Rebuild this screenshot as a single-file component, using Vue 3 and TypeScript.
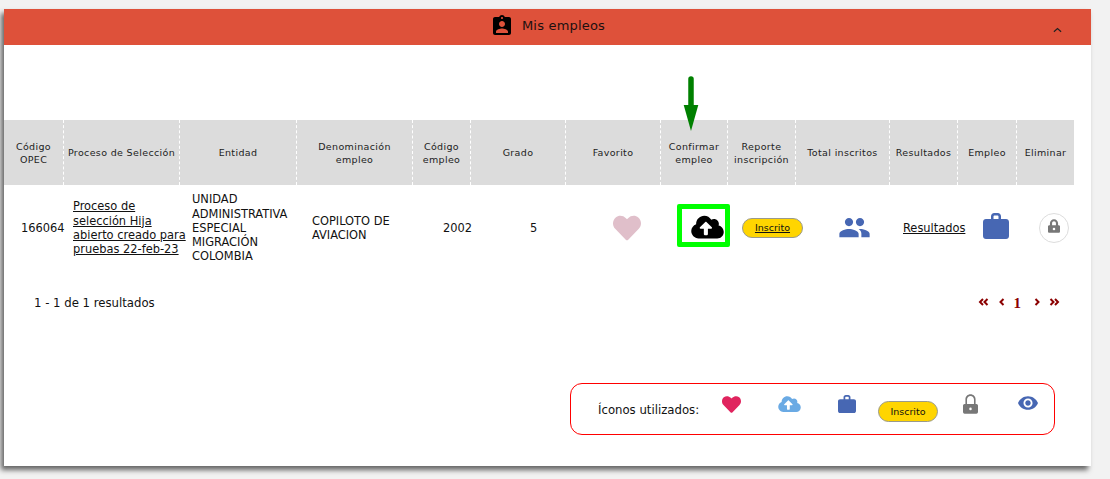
<script setup lang="ts">
const headers: string[] = [
  'Código OPEC',
  'Proceso de Selección',
  'Entidad',
  'Denominación empleo',
  'Código empleo',
  'Grado',
  'Favorito',
  'Confirmar empleo',
  'Reporte inscripción',
  'Total inscritos',
  'Resultados',
  'Empleo',
  'Eliminar',
]
</script>

<template>
  <div class="page">
    <div class="card">
      <header class="bar">
        <svg class="bar-icon" viewBox="0 0 24 24"><path d="M19 3h-4.18C14.4 1.84 13.3 1 12 1c-1.3 0-2.4.84-2.82 2H5c-1.1 0-2 .9-2 2v14c0 1.1.9 2 2 2h14c1.1 0 2-.9 2-2V5c0-1.1-.9-2-2-2zm-7 0c.55 0 1 .45 1 1s-.45 1-1 1-1-.45-1-1 .45-1 1-1zm0 4c1.66 0 3 1.34 3 3s-1.34 3-3 3-3-1.34-3-3 1.34-3 3-3zm6 12H6v-1.4c0-2 4-3.1 6-3.1s6 1.1 6 3.1V19z" /></svg>
        <span class="bar-title">Mis empleos</span>
        <svg class="bar-chevron" viewBox="0 0 10 6"><path d="M1 5 L5 1.5 L9 5" /></svg>
      </header>

      <svg class="arrow" viewBox="0 0 16 56">
        <path d="M8 3 V30" />
        <polygon points="0.7,29 15.300,29 8,55" />
      </svg>

      <div class="thead">
        <div v-for="h in headers" :key="h" class="th"><span>{{ h }}</span></div>
      </div>

      <div class="row">
        <div class="cell">166064</div>
        <div class="cell"><a class="link">Proceso de selección Hija abierto creado para pruebas 22-feb-23</a></div>
        <div class="cell">UNIDAD ADMINISTRATIVA ESPECIAL MIGRACIÓN COLOMBIA</div>
        <div class="cell">COPILOTO DE AVIACION</div>
        <div class="cell">2002</div>
        <div class="cell">5</div>
        <div class="cell">
          <svg class="heart" viewBox="0 0 512 512"><path d="M462.3 62.6C407.5 15.9 326 24.3 275.7 76.2L256 96.5l-19.7-20.3C186.1 24.3 104.5 15.9 49.7 62.6c-62.8 53.6-66.1 149.8-9.9 207.9l193.5 199.8c12.5 12.9 32.8 12.9 45.3 0l193.5-199.8c56.3-58.1 53-154.3-9.8-207.9z" /></svg>
        </div>
        <div class="cell">
          <div class="confirm">
            <svg class="cloud" viewBox="0 0 640 512"><path d="M537.6 226.6c4.1-10.7 6.4-22.4 6.4-34.6 0-53-43-96-96-96-19.7 0-38.1 6-53.3 16.2C367 64.2 315.3 32 256 32c-88.4 0-160 71.6-160 160 0 2.7.1 5.4.2 8.1C40.2 219.8 0 273.2 0 336c0 79.5 64.5 144 144 144h368c70.7 0 128-57.3 128-128 0-61.9-44-113.6-102.4-125.4zM393.4 288H328v112c0 8.8-7.2 16-16 16h-48c-8.8 0-16-7.2-16-16V288h-65.4c-14.3 0-21.4-17.2-11.3-27.3l105.4-105.4c6.2-6.2 16.4-6.2 22.6 0l105.4 105.4c10.1 10.1 2.9 27.3-11.3 27.3z" /></svg>
          </div>
        </div>
        <div class="cell"><span class="badge badge-link">Inscrito</span></div>
        <div class="cell">
          <svg class="people" viewBox="0 0 24 24"><path d="M16 11c1.66 0 2.99-1.34 2.99-3S17.66 5 16 5c-1.66 0-3 1.34-3 3s1.34 3 3 3zm-8 0c1.66 0 2.99-1.34 2.99-3S9.66 5 8 5C6.34 5 5 6.34 5 8s1.34 3 3 3zm0 2c-2.33 0-7 1.17-7 3.5V19h14v-2.5c0-2.33-4.67-3.5-7-3.5zm8 0c-.29 0-.62.02-.97.05 1.16.84 1.97 1.97 1.97 3.45V19h6v-2.5c0-2.33-4.67-3.5-7-3.5z" /></svg>
        </div>
        <div class="cell"><a class="link">Resultados</a></div>
        <div class="cell">
          <svg class="case case-lg" viewBox="0 0 26 26"><path d="M3 6h5V3.2C8 1.4 9.4 0 11.2 0h3.6C16.6 0 18 1.4 18 3.2V6h5c1.7 0 3 1.3 3 3v14c0 1.7-1.3 3-3 3H3c-1.7 0-3-1.3-3-3V9c0-1.7 1.3-3 3-3zm7.5 0h5V3.4c0-.5-.4-.9-.9-.9h-3.2c-.5 0-.9.4-.9.9V6z" fill-rule="evenodd" /></svg>
        </div>
        <div class="cell">
          <div class="lock-circle">
            <svg class="lock lock-sm" viewBox="0 0 448 512"><path d="M400 224h-24v-72C376 68.2 307.8 0 224 0S72 68.2 72 152v72H48c-26.5 0-48 21.5-48 48v192c0 26.5 21.5 48 48 48h352c26.5 0 48-21.5 48-48V272c0-26.500-21.500-48-48-48zm-104 0H152v-72c0-39.7 32.3-72 72-72s72 32.3 72 72v72z" /><circle cx="224" cy="368" r="48" fill="#fff" /></svg>
          </div>
        </div>
      </div>

      <div class="pager">
        <span class="count">1 - 1 de 1 resultados</span>
        <div class="pages">
          <svg class="pg pg-d" viewBox="0 0 11 8"><path d="M5 1 L2 4 L5 7 M9.5 1 L6.500 4 L9.5 7" /></svg>
          <svg class="pg pg-s pg-prev" viewBox="0 0 6 8"><path d="M4.500 1 L1.500 4 L4.500 7" /></svg>
          <b class="page-num">1</b>
          <svg class="pg pg-s pg-next" viewBox="0 0 6 8"><path d="M1.500 1 L4.500 4 L1.500 7" /></svg>
          <svg class="pg pg-d" viewBox="0 0 11 8"><path d="M1.500 1 L4.500 4 L1.500 7 M6 1 L9 4 L6 7" /></svg>
        </div>
      </div>

      <div class="legend">
        <span class="legend-text">Íconos utilizados:</span>
        <svg class="lg-heart" viewBox="0 0 512 512"><path d="M462.3 62.6C407.5 15.9 326 24.3 275.7 76.2L256 96.5l-19.7-20.3C186.1 24.3 104.5 15.9 49.7 62.6c-62.8 53.6-66.1 149.8-9.9 207.9l193.5 199.8c12.5 12.9 32.8 12.9 45.3 0l193.5-199.8c56.3-58.1 53-154.3-9.8-207.9z" /></svg>
        <svg class="lg-cloud" viewBox="0 0 640 512"><path d="M537.6 226.6c4.1-10.7 6.4-22.4 6.4-34.6 0-53-43-96-96-96-19.7 0-38.1 6-53.3 16.2C367 64.2 315.3 32 256 32c-88.4 0-160 71.6-160 160 0 2.7.1 5.4.2 8.1C40.2 219.8 0 273.2 0 336c0 79.5 64.5 144 144 144h368c70.7 0 128-57.3 128-128 0-61.9-44-113.6-102.4-125.4zM393.4 288H328v112c0 8.8-7.2 16-16 16h-48c-8.8 0-16-7.2-16-16V288h-65.4c-14.3 0-21.4-17.2-11.3-27.3l105.4-105.4c6.2-6.2 16.4-6.2 22.6 0l105.4 105.4c10.1 10.1 2.9 27.3-11.3 27.3z" /></svg>
        <svg class="case lg-case" viewBox="0 0 26 26"><path d="M3 6h5V3.200C8 1.400 9.400 0 11.200 0h3.600C16.600 0 18 1.400 18 3.200V6h5c1.700 0 3 1.300 3 3v14c0 1.700-1.300 3-3 3H3c-1.700 0-3-1.300-3-3V9c0-1.700 1.300-3 3-3zm7.500 0h5V3.400c0-.5-.4-.9-.9-.9h-3.200c-.5 0-.9.4-.9.9V6z" fill-rule="evenodd" /></svg>
        <span class="badge lg-badge">Inscrito</span>
        <svg class="lock lg-lock" viewBox="0 0 448 580"><path d="M400 292h-24v-140C376 68.200 307.800 0 224 0S72 68.200 72 152v140H48c-26.500 0-48 21.500-48 48v192c0 26.500 21.500 48 48 48h352c26.500 0 48-21.500 48-48V340c0-26.500-21.500-48-48-48zm-72 0H120v-140c0-57 47-104 104-104s104 47 104 104v140z" /><circle cx="224" cy="436" r="38" fill="#fff" /></svg>
        <svg class="lg-eye" viewBox="1 4.500 22 15"><path d="M12 4.500C7 4.500 2.730 7.610 1 12c1.730 4.390 6 7.500 11 7.500s9.270-3.110 11-7.500c-1.730-4.390-6-7.500-11-7.500zM12 17c-2.760 0-5-2.240-5-5s2.240-5 5-5 5 2.240 5 5-2.240 5-5 5zm0-8c-1.660 0-3 1.340-3 3s1.340 3 3 3 3-1.340 3-3-1.340-3-3-3z" /></svg>
      </div>
    </div>
  </div>
</template>

<style>
html, body {
  margin: 0;
  background: #f2f2f2;
}
</style>

<style scoped>
.page {
  box-sizing: border-box;
  width: 1110px;
  height: 479px;
  padding: 9px 0 0 4px;
  overflow: hidden;
  background: #f2f2f2;
}
.card {
  position: relative;
  box-sizing: border-box;
  width: 1087px;
  height: 457px;
  background: #fff;
  box-shadow: -3px 4px 5px #666;
  font-family: "DejaVu Sans Condensed", "DejaVu Sans", sans-serif;
  font-size: 13px;
  color: #111;
}
.bar {
  position: relative;
  display: flex;
  align-items: center;
  justify-content: center;
  height: 36px;
  padding: 0 0 3px 0;
  box-sizing: border-box;
  background: #de513a;
  color: #1c1010;
}
.bar-icon {
  width: 24px;
  height: 24px;
  margin-right: 8px;
  fill: #000;
}
.bar-title {
  font-family: "DejaVu Sans", sans-serif;
  font-size: 13px;
  letter-spacing: 0.2px;
}
.bar-chevron {
  position: absolute;
  right: 29px;
  top: 18px;
  width: 9px;
  height: 6px;
  fill: none;
  stroke: #222;
  stroke-width: 1.4;
}
.arrow {
  position: absolute;
  left: 679px;
  top: 67px;
  width: 16px;
  height: 56px;
  z-index: 2;
}
.arrow path {
  stroke: #008000;
  stroke-width: 5.5;
  stroke-linecap: round;
  fill: none;
}
.arrow polygon {
  fill: #008000;
}
.thead {
  display: grid;
  grid-template-columns: 60px 116px 117px 116px 58px 95px 95px 67px 68px 94px 68px 59px 57px;
  width: 1070px;
  height: 65px;
  margin-top: 75px;
  background: #dcdcdc;
}
.th {
  display: flex;
  align-items: center;
  justify-content: center;
  box-sizing: border-box;
  padding: 0 2px;
  border-right: 1px dashed #fff;
  font-family: "DejaVu Sans", sans-serif;
  font-size: 9.5px;
  letter-spacing: 0.35px;
  line-height: 13px;
  text-align: center;
  color: #222;
}
.th:last-child {
  border-right: none;
}
.row {
  display: grid;
  grid-template-columns: 52px 119px 120px 131px 87px 83px 64px 65px 97px 64px 80px 56px 36px;
  height: 86px;
  padding-left: 17px;
  align-items: center;
  font-size: 12.7px;
  line-height: 14.3px;
}
.cell {
  display: flex;
  align-items: center;
  padding-right: 2px;
  min-width: 0;
}
.link {
  color: #111;
  text-decoration: underline;
}
.heart {
  width: 28px;
  height: 28px;
  fill: #e0bfca;
}
.confirm {
  display: flex;
  align-items: center;
  justify-content: center;
  box-sizing: border-box;
  width: 53px;
  height: 43px;
  margin-bottom: 6px;
  padding: 3px 0 0 7px;
  border: 5px solid #00ff00;
  border-radius: 2px;
}
.cloud {
  width: 33px;
  height: 26px;
  flex: none;
  fill: #000;
}
.badge {
  display: inline-flex;
  align-items: center;
  justify-content: center;
  box-sizing: border-box;
  border: 1px solid #9a9a8a;
  border-radius: 11px;
  background: #ffd500;
  font-family: "DejaVu Sans", sans-serif;
  font-size: 9.5px;
  color: #111;
}
.badge-link {
  width: 61px;
  height: 20px;
  text-decoration: underline;
}
.people {
  width: 33px;
  height: 33px;
  margin: 0 0 2px -1px;
  fill: #4767b3;
}
.case {
  fill: #4767b3;
}
.case-lg {
  width: 26px;
  height: 26px;
  margin-bottom: 4px;
}
.lock-circle {
  display: flex;
  align-items: center;
  justify-content: center;
  box-sizing: border-box;
  width: 30px;
  height: 30px;
  padding-bottom: 5px;
  border: 1px solid #ddd;
  border-radius: 50%;
}
.lock {
  fill: #777;
}
.lock-sm {
  width: 12px;
  height: 14px;
}
.pager {
  display: flex;
  align-items: center;
  justify-content: space-between;
  height: 20px;
  margin-top: 21px;
  padding: 0 31px 0 30px;
}
.pages {
  display: flex;
  align-items: center;
  color: #8b0000;
}
.pg {
  fill: none;
  stroke: #8b0000;
  stroke-width: 2;
  height: 8px;
}
.pg-d {
  width: 11px;
}
.pg-s {
  width: 6px;
}
.pg-prev {
  margin: 0 9px 0 10px;
}
.pg-next {
  margin: 0 9px 0 13px;
}
.page-num {
  font-family: "Liberation Serif", serif;
  font-size: 15px;
  line-height: 16px;
  padding-top: 1px;
}
.legend {
  display: flex;
  align-items: flex-start;
  box-sizing: border-box;
  width: 485px;
  height: 52px;
  margin: 71px 0 0 566px;
  padding-left: 27px;
  border: 1px solid #f00;
  border-radius: 12px;
}
.legend-text {
  width: 124px;
  margin-top: 18px;
  line-height: 16px;
}
.lg-heart {
  width: 19px;
  height: 19px;
  margin: 11px 37px 0 0;
  fill: #e0245e;
}
.lg-cloud {
  width: 23px;
  height: 18px;
  margin: 11px 37px 0 0;
  fill: #6aaae4;
}
.lg-case {
  width: 18px;
  height: 18px;
  margin: 11px 22px 0 0;
}
.lg-badge {
  width: 60px;
  height: 21px;
  margin: 17px 25px 0 0;
}
.lg-lock {
  width: 15px;
  height: 20px;
  margin: 10px 40px 0 0;
}
.lg-eye {
  width: 20px;
  height: 14px;
  margin: 12px 0 0 0;
  fill: #4767b3;
}
</style>
